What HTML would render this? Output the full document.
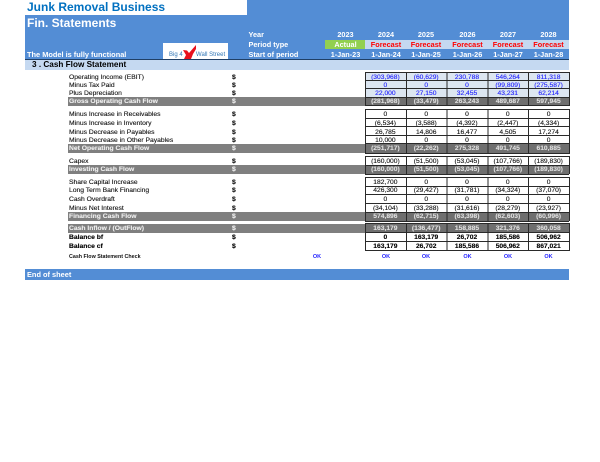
<!DOCTYPE html>
<html><head><meta charset="utf-8"><style>
html,body{margin:0;padding:0;background:#fff;width:600px;height:462px;overflow:hidden}
body{font-family:"Liberation Sans",sans-serif;position:relative}
#w{position:absolute;left:0;top:0;width:600px;height:462px;filter:blur(.3px)}
.a{position:absolute;white-space:nowrap}
.h{color:#fff;font-weight:bold;font-size:7.3px;line-height:10px}
.c{position:absolute;text-align:center;width:41px;color:#fff;font-weight:bold;font-size:7.3px;line-height:10px}
.f{color:#f00}
.r{position:absolute;left:69px;width:300px;height:9px;line-height:9px;font-size:6.75px;color:#111;white-space:nowrap;-webkit-text-stroke:.12px currentColor}
.r i{position:absolute;left:163px;top:0;font-style:normal;font-weight:bold}
.g{color:#eee;font-weight:bold}
.b{font-weight:bold;color:#000}
.band{position:absolute;left:67.5px;width:501.5px;background:#7f7f7f}
.gc{position:absolute;left:365px;width:204px;background:#6f6f6f}
.v{position:absolute;left:365px;width:204px;height:9px;line-height:9px;display:grid;grid-template-columns:repeat(5,40.8px);font-size:6.7px;text-align:center;color:#111;white-space:nowrap;-webkit-text-stroke:.12px currentColor}
.bl{color:#22f}
.gv{color:#ddd;font-weight:bold}
.bd{font-weight:bold;color:#000}
.hl{position:absolute;left:365px;width:204px;height:1px;background:#2a2a2a}
.vl{position:absolute;left:365px;width:204.5px;background:repeating-linear-gradient(90deg,#2a2a2a 0,#2a2a2a 1px,transparent 1px,transparent 40.8px)}
.ok{position:absolute;top:253px;font-size:5.5px;line-height:8px;font-weight:bold;color:#22f;width:41px;text-align:center}
</style></head><body><div id="w">
<div class="a" style="left:247px;top:0;width:322px;height:15px;background:#538dd5"></div>
<div class="a" style="left:25px;top:15px;width:544px;height:44px;background:#538dd5"></div>
<div class="a" style="left:25px;top:58.5px;width:544px;height:1.5px;background:#1f3f66"></div>
<div class="a" style="left:27px;top:0;font-size:12px;line-height:15px;font-weight:bold;color:#0070c0">Junk Removal Business</div>
<div class="a" style="left:27px;top:16px;font-size:12px;line-height:15px;font-weight:bold;color:#fff">Fin. Statements</div>
<div class="a h" style="left:27px;top:49.5px;font-size:7.4px;line-height:10px">The Model is fully functional</div>
<div class="a h" style="left:248.5px;top:30px">Year</div>
<div class="a h" style="left:248.5px;top:40px">Period type</div>
<div class="a h" style="left:248.5px;top:50px">Start of period</div>
<div class="a" style="left:163px;top:43px;width:65px;height:15.5px;background:#fff;overflow:hidden">
<span class="a" style="left:6px;top:8px;font-size:6px;line-height:8px;color:#2f75b5">Big 4</span>
<span class="a" style="left:33px;top:8px;font-size:6px;line-height:8px;color:#2f75b5">Wall Street</span>
<svg class="a" style="left:19px;top:1px" width="16" height="15" viewBox="0 0 16 15"><path d="M1 6 L5 6.5 L7 9 L14 1 L14 5 L11 10 L9 15 L2 15 L4 11 Z" fill="#e8101c"/></svg>
</div>
<div class="c" style="left:325px;top:30px">2023</div><div class="c" style="left:365.5px;top:30px">2024</div><div class="c" style="left:405.5px;top:30px">2025</div><div class="c" style="left:447px;top:30px">2026</div><div class="c" style="left:487.5px;top:30px">2027</div><div class="c" style="left:528px;top:30px">2028</div>
<div class="a" style="left:325px;top:40px;width:40px;height:9px;background:#92d050"></div>
<div class="a" style="left:365px;top:40px;width:204px;height:9px;background:#c5d9f1"></div>
<div class="c" style="left:325px;top:40px">Actual</div><div class="c f" style="left:365.5px;top:40px">Forecast</div><div class="c f" style="left:405.5px;top:40px">Forecast</div><div class="c f" style="left:447px;top:40px">Forecast</div><div class="c f" style="left:487.5px;top:40px">Forecast</div><div class="c f" style="left:528px;top:40px">Forecast</div>
<div class="c" style="left:325px;top:50px">1-Jan-23</div><div class="c" style="left:365.5px;top:50px">1-Jan-24</div><div class="c" style="left:405.5px;top:50px">1-Jan-25</div><div class="c" style="left:447px;top:50px">1-Jan-26</div><div class="c" style="left:487.5px;top:50px">1-Jan-27</div><div class="c" style="left:528px;top:50px">1-Jan-28</div>
<div class="a" style="left:25px;top:60px;width:544px;height:10px;background:#c5d9f1"></div>
<div class="a" style="left:32px;top:60px;font-size:8.2px;line-height:10px;font-weight:bold;color:#000">3 . Cash Flow Statement</div>

<div class="a" style="left:365px;top:72px;width:204px;height:25px;background:#dce6f1"></div>
<div class="band" style="top:97px;height:9px"></div><div class="gc" style="top:97px;height:9px"></div>
<div class="band" style="top:144px;height:9px"></div><div class="gc" style="top:144px;height:9px"></div>
<div class="band" style="top:165px;height:9px"></div><div class="gc" style="top:165px;height:9px"></div>
<div class="band" style="top:212px;height:9px"></div><div class="gc" style="top:212px;height:9px"></div>
<div class="band" style="top:224px;height:9px"></div><div class="gc" style="top:224px;height:9px"></div>

<div class="r" style="top:73px">Operating Income (EBIT)<i>$</i></div>
<div class="r" style="top:81px">Minus Tax Paid<i>$</i></div>
<div class="r" style="top:89px">Plus Depreciation<i>$</i></div>
<div class="r g" style="top:97px">Gross Operating Cash Flow<i>$</i></div>
<div class="v bl" style="top:73px"><div>(303,968)</div><div>(60,629)</div><div>230,788</div><div>546,264</div><div>811,318</div></div>
<div class="v bl" style="top:81px"><div>0</div><div>0</div><div>0</div><div>(99,809)</div><div>(275,587)</div></div>
<div class="v bl" style="top:89px"><div>22,000</div><div>27,150</div><div>32,455</div><div>43,231</div><div>62,214</div></div>
<div class="v gv" style="top:97px"><div>(281,968)</div><div>(33,479)</div><div>263,243</div><div>489,687</div><div>597,945</div></div>

<div class="r" style="top:110px">Minus Increase in Receivables<i>$</i></div>
<div class="r" style="top:119px">Minus Increase in Inventory<i>$</i></div>
<div class="r" style="top:128px">Minus Decrease in Payables<i>$</i></div>
<div class="r" style="top:136px">Minus Decrease in Other Payables<i>$</i></div>
<div class="r g" style="top:144px">Net Operating Cash Flow<i>$</i></div>
<div class="v" style="top:110px"><div>0</div><div>0</div><div>0</div><div>0</div><div>0</div></div>
<div class="v" style="top:119px"><div>(6,534)</div><div>(3,588)</div><div>(4,392)</div><div>(2,447)</div><div>(4,334)</div></div>
<div class="v" style="top:128px"><div>26,785</div><div>14,806</div><div>16,477</div><div>4,505</div><div>17,274</div></div>
<div class="v" style="top:136px"><div>10,000</div><div>0</div><div>0</div><div>0</div><div>0</div></div>
<div class="v gv" style="top:144px"><div>(251,717)</div><div>(22,262)</div><div>275,328</div><div>491,745</div><div>610,885</div></div>

<div class="r" style="top:157px">Capex<i>$</i></div>
<div class="r g" style="top:165px">Investing Cash Flow<i>$</i></div>
<div class="v" style="top:157px"><div>(160,000)</div><div>(51,500)</div><div>(53,045)</div><div>(107,766)</div><div>(189,830)</div></div>
<div class="v gv" style="top:165px"><div>(160,000)</div><div>(51,500)</div><div>(53,045)</div><div>(107,766)</div><div>(189,830)</div></div>

<div class="r" style="top:178px">Share Capital Increase<i>$</i></div>
<div class="r" style="top:186px">Long Term Bank Financing<i>$</i></div>
<div class="r" style="top:195px">Cash Overdraft<i>$</i></div>
<div class="r" style="top:204px">Minus Net Interest<i>$</i></div>
<div class="r g" style="top:212px">Financing Cash Flow<i>$</i></div>
<div class="v" style="top:178px"><div>182,700</div><div>0</div><div>0</div><div>0</div><div>0</div></div>
<div class="v" style="top:186px"><div>426,300</div><div>(29,427)</div><div>(31,781)</div><div>(34,324)</div><div>(37,070)</div></div>
<div class="v" style="top:195px"><div>0</div><div>0</div><div>0</div><div>0</div><div>0</div></div>
<div class="v" style="top:204px"><div>(34,104)</div><div>(33,288)</div><div>(31,616)</div><div>(28,279)</div><div>(23,927)</div></div>
<div class="v gv" style="top:212px"><div>574,896</div><div>(62,715)</div><div>(63,398)</div><div>(62,603)</div><div>(60,996)</div></div>

<div class="r g" style="top:224px">Cash Inflow / (OutFlow)<i>$</i></div>
<div class="r b" style="top:233px">Balance bf<i>$</i></div>
<div class="r b" style="top:242px">Balance cf<i>$</i></div>
<div class="v gv" style="top:224px"><div>163,179</div><div>(136,477)</div><div>158,885</div><div>321,376</div><div>360,058</div></div>
<div class="v bd" style="top:233px"><div>0</div><div>163,179</div><div>26,702</div><div>185,586</div><div>506,962</div></div>
<div class="v bd" style="top:242px"><div>163,179</div><div>26,702</div><div>185,586</div><div>506,962</div><div>867,021</div></div>

<div class="vl" style="top:72px;height:34px"></div>
<div class="vl" style="top:109px;height:45px"></div>
<div class="vl" style="top:156px;height:18px"></div>
<div class="vl" style="top:177px;height:44px"></div>
<div class="vl" style="top:223px;height:28px"></div>
<div class="hl" style="top:72px"></div><div class="hl" style="top:80px"></div><div class="hl" style="top:88px"></div><div class="hl" style="top:97px"></div><div class="hl" style="top:105px"></div>
<div class="hl" style="top:109px"></div><div class="hl" style="top:118px"></div><div class="hl" style="top:126px"></div><div class="hl" style="top:135px"></div><div class="hl" style="top:143px"></div><div class="hl" style="top:153px"></div>
<div class="hl" style="top:156px"></div><div class="hl" style="top:165px"></div><div class="hl" style="top:174px"></div>
<div class="hl" style="top:177px"></div><div class="hl" style="top:186px"></div><div class="hl" style="top:194px"></div><div class="hl" style="top:203px"></div><div class="hl" style="top:212px"></div><div class="hl" style="top:221px"></div>
<div class="hl" style="top:223px"></div><div class="hl" style="top:232px"></div><div class="hl" style="top:241px"></div><div class="hl" style="top:250px"></div>

<div class="a" style="left:69px;top:253px;font-size:5.35px;line-height:8px;font-weight:bold;color:#111">Cash Flow Statement Check</div>
<div class="ok" style="left:296.5px">OK</div><div class="ok" style="left:365.5px">OK</div><div class="ok" style="left:405.5px">OK</div><div class="ok" style="left:447px">OK</div><div class="ok" style="left:487.5px">OK</div><div class="ok" style="left:528px">OK</div>
<div class="a" style="left:25px;top:269px;width:544px;height:11px;background:#538dd5"></div>
<div class="a h" style="left:27px;top:269.5px;font-size:7.4px">End of sheet</div>
</div></body></html>
